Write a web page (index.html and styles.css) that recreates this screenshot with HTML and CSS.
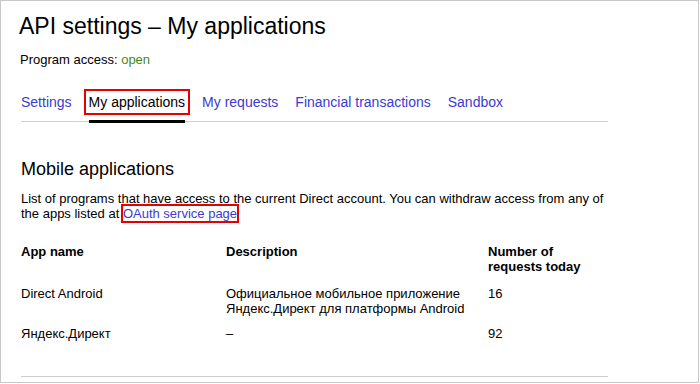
FILE: index.html
```html
<!DOCTYPE html>
<html lang="en">
<head>
<meta charset="utf-8">
<title>API settings – My applications</title>
<link rel="stylesheet" href="styles.css">
</head>
<body>
<div class="frame">
  <h1 class="title">API settings – My applications</h1>
  <p class="access">Program access: <span class="open">open</span></p>
  <nav class="tabs">
    <a class="tab" href="#">Settings</a>
    <a class="tab tab-active" href="#"><span class="tab-label">My applications</span></a>
    <a class="tab" href="#">My requests</a>
    <a class="tab" href="#">Financial transactions</a>
    <a class="tab" href="#">Sandbox</a>
  </nav>
  <h2 class="section-title">Mobile applications</h2>
  <p class="intro">List of programs that have access to the current Direct account. You can withdraw access from any of the apps listed at <a class="link link-marked" href="#">OAuth service page</a></p>
  <table class="apps">
    <thead>
      <tr>
        <th class="col-name">App name</th>
        <th class="col-desc">Description</th>
        <th class="col-num">Number of<br>requests today</th>
      </tr>
    </thead>
    <tbody>
      <tr>
        <td>Direct Android</td>
        <td>Официальное мобильное приложение<br>Яндекс.Директ для платформы Android</td>
        <td>16</td>
      </tr>
      <tr>
        <td>Яндекс.Директ</td>
        <td>–</td>
        <td>92</td>
      </tr>
    </tbody>
  </table>
  <div class="bottom-rule"></div>
</div>
</body>
</html>
```

FILE: styles.css
```css
html, body {
  margin: 0;
  padding: 0;
  background: #fff;
}

body {
  font-family: "Liberation Sans", Arial, sans-serif;
  color: #000;
}

.frame {
  box-sizing: border-box;
  width: 699px;
  height: 383px;
  border: 1px solid #c8c8c8;
  padding: 11px 90px 0 20px;
  overflow: hidden;
}

.title {
  margin: 0 0 0 -2px;
  font-size: 23px;
  line-height: 28px;
  font-weight: normal;
}

.access {
  margin: 12px 0 0 -1px;
  font-size: 13px;
  line-height: 15px;
}

.open {
  color: #3d8b1e;
}

.tabs {
  display: flex;
  margin-top: 27px;
  border-bottom: 1px solid #cfcfcf;
}

.tab {
  font-size: 14px;
  line-height: 16px;
  color: #3b3bd1;
  text-decoration: none;
  padding-bottom: 10px;
  border-bottom: 3px solid transparent;
  margin-bottom: -2px;
  margin-right: 17px;
}

.tab-active {
  color: #000;
  border-bottom-color: #000;
}

.tab-label {
  outline: 2px solid #e60000;
  outline-offset: 3px;
}

.section-title {
  margin: 37px 0 0;
  font-size: 18px;
  line-height: 21px;
  font-weight: normal;
}

.intro {
  margin: 11px 0 0;
  font-size: 13px;
  line-height: 15px;
}

.link {
  color: #3b3bd1;
  text-decoration: none;
}

.link-marked {
  outline: 2px solid #e60000;
  outline-offset: 0;
}

.apps {
  margin-top: 23px;
  border-collapse: collapse;
  width: 100%;
  font-size: 13px;
  line-height: 15px;
}

.apps th {
  text-align: left;
  font-weight: bold;
  padding: 0 0 6px;
  vertical-align: top;
}

.apps td {
  padding: 6px 0 4px;
  vertical-align: top;
}

.col-name {
  width: 205px;
}

.col-desc {
  width: 262px;
}

.bottom-rule {
  margin-top: 31px;
  border-top: 1px solid #cfcfcf;
}
```
